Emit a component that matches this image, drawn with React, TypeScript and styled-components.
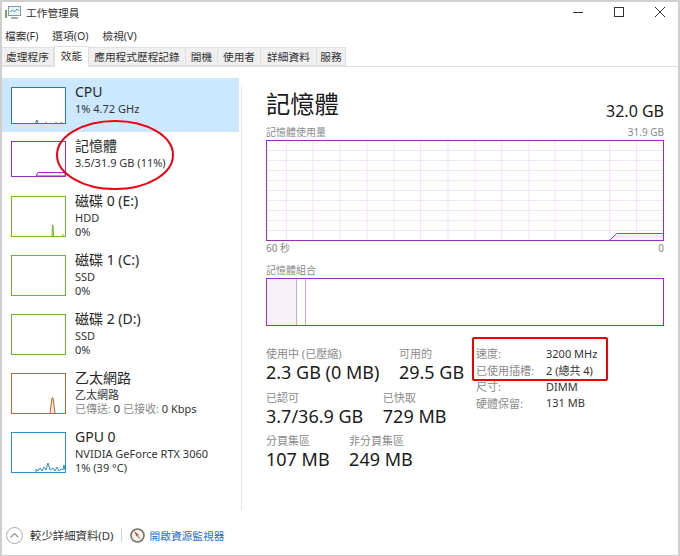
import React from 'react';
import styled, { createGlobalStyle } from 'styled-components';

const GlobalStyle = createGlobalStyle`
  html, body {
    margin: 0;
    padding: 0;
    background: #ffffff;
  }
  * {
    box-sizing: border-box;
  }
`

const Window = styled.div`
  position: relative;
  width: 680px;
  height: 556px;
  background: #ffffff;
  border: 1px solid #cfcfcf;
  border-width: 2px 2px 1px 2px;
  font-family: "Noto Sans", "Noto Sans CJK TC", sans-serif;
  color: #1a1a1a;
  display: flex;
  flex-direction: column;
  overflow: hidden;
`

const TitleBar = styled.div`
  height: 22px;
  display: flex;
  align-items: center;
  padding: 0 0 2px 3px;
  flex: none;
`

const TitleText = styled.span`
  font-size: 10.7px;
  margin-left: 5px;
  color: #333333;
`

const WindowButtons = styled.div`
  margin-left: auto;
  display: flex;
  align-items: center;
  gap: 31px;
  padding-right: 13px;
  color: #333333;
`

const MenuBar = styled.div`
  height: 22px;
  display: flex;
  align-items: center;
  gap: 14px;
  padding-left: 3px;
  font-size: 10.7px;
  color: #333333;
  flex: none;
`

const TabStrip = styled.div`
  height: 21px;
  display: flex;
  align-items: flex-end;
  border-bottom: 1px solid #e0e0e0;
  flex: none;
`

const Tab = styled.div<{ $active?: boolean; $width: number }>`
  width: ${props => props.$width}px;
  height: ${props => props.$active ? 21 : 19}px;
  margin-bottom: ${props => props.$active ? -1 : 0}px;
  background: ${props => props.$active ? '#ffffff' : '#f0f0f0'};
  border: 1px solid #e0e0e0;
  border-bottom: ${props => props.$active ? 'none' : '1px solid #e0e0e0'};
  border-left-width: ${props => props.$active ? 1 : 0}px;
  font-size: 10.7px;
  line-height: 18px;
  text-align: center;
  color: #333333;
  white-space: nowrap;
`

const Body = styled.div`
  flex: 1;
  display: flex;
  min-height: 0;
`

const Sidebar = styled.div`
  width: 237px;
  margin-top: 11px;
  flex: none;
`

const SidebarRule = styled.div`
  width: 1px;
  height: 423px;
  margin: 20px 0 0 2px;
  background: #e3e3e3;
  flex: none;
`

const SideItem = styled.div<{ $selected?: boolean; $height: number }>`
  height: ${props => props.$height}px;
  padding: 9px 0 0 9px;
  display: flex;
  gap: 9px;
  background: ${props => props.$selected ? '#cce8ff' : 'transparent'};
`

const Thumb = styled.svg`
  flex: none;
  display: block;
`

const SideText = styled.div`
  margin-top: -6px;
  min-width: 0;
  white-space: nowrap;
`

const SideName = styled.div`
  font-size: 14px;
  line-height: 21px;
  color: #262626;
`

const SideLine = styled.div`
  font-size: 11px;
  line-height: 13.5px;
  color: #333333;
`

const Muted = styled.span`
  color: #8a8a8a;
`

const Main = styled.div`
  flex: 1;
  padding: 15px 14px 0 24px;
  min-width: 0;
`

const Header = styled.div`
  display: flex;
  justify-content: space-between;
  align-items: flex-end;
  height: 40px;
  margin-bottom: 3px;
`

const HeaderTitle = styled.div`
  font-size: 24.3px;
  line-height: 36px;
  color: #1a1a1a;
`

const HeaderValue = styled.div`
  font-size: 16px;
  line-height: 22px;
  color: #1a1a1a;
`

const ChartLabels = styled.div`
  display: flex;
  justify-content: space-between;
  font-size: 10px;
  line-height: 14px;
  color: #8a8a8a;
`

const Chart = styled.svg`
  display: block;
  margin-top: 1px;
`

const SectionGap = styled.div`
  height: 8px;
`

const Lower = styled.div`
  display: flex;
  margin-top: 20px;
`

const StatColumn = styled.div`
  width: 210px;
  flex: none;
`

const StatRow = styled.div`
  display: flex;
  gap: 19.5px;
  height: 43.5px;
`

const StatLabel = styled.div`
  font-size: 11px;
  line-height: 16px;
  color: #8a8a8a;
  white-space: nowrap;
`

const StatValue = styled.div`
  font-size: 18px;
  line-height: 21px;
  color: #1a1a1a;
  white-space: nowrap;
`

const DetailTable = styled.div`
  display: grid;
  grid-template-columns: 70px auto;
  grid-auto-rows: 16.5px;
  align-items: center;
  font-size: 11px;
  margin-top: -1px;
`

const DetailKey = styled.div`
  color: #8a8a8a;
  white-space: nowrap;
`

const DetailValue = styled.div`
  color: #333333;
  white-space: nowrap;
`

const Footer = styled.div`
  height: 40px;
  margin-top: auto;
  display: flex;
  align-items: center;
  padding-left: 4px;
  flex: none;
`

const FooterIcon = styled.svg`
  flex: none;
  display: block;
`

const FooterText = styled.span`
  margin-left: 7px;
  font-size: 11.4px;
  color: #333333;
`

const FooterDivider = styled.div`
  width: 1px;
  height: 14px;
  background: #d5d5d5;
  margin: 0 8px 0 7px;
`

const FooterLink = styled.span`
  margin-left: 5px;
  font-size: 10.7px;
  color: #1f6fd0;
`

const RedOval = styled.svg`
  position: absolute;
  left: 52px;
  top: 116px;
  pointer-events: none;
`

const RedBox = styled.div`
  position: absolute;
  left: 470px;
  top: 335px;
  width: 136px;
  height: 44px;
  border: 2px solid #f00000;
  border-radius: 2px;
  pointer-events: none;
`

const tabs = [
  { label: '處理程序', width: 52 },
  { label: '效能', width: 35, active: true },
  { label: '應用程式歷程記錄', width: 97 },
  { label: '開機', width: 32 },
  { label: '使用者', width: 43 },
  { label: '詳細資料', width: 56 },
  { label: '服務', width: 29 },
]

interface ThumbProps {
  color: string,
  height: number,
  path?: string,
  fill?: string
}

const Sparkline = ({ color, height, path, fill }: ThumbProps) => (
  <Thumb width={55} height={height} viewBox={`0 0 55 ${height}`}>
    <rect x={0.5} y={0.5} width={54} height={height - 1} fill="#ffffff" stroke={color} />
    {path && <path d={path} fill={fill || 'none'} stroke={color} strokeWidth={1} />}
  </Thumb>
)

const verticals = [20.7, 47, 74, 101, 128, 154.7, 182, 209, 235.7, 263, 289, 316, 343.7, 370.7]
const horizontals = [10, 20, 30, 40, 50, 60, 70, 80, 90]

const App = () => {
  return (
    <Window>
      <GlobalStyle />
      <TitleBar>
        <svg width={16} height={15} viewBox="0 0 16 15">
          <rect x={0} y={5} width={2} height={8} fill="#6fae6a" />
          <rect x={3.5} y={1.5} width={12} height={9} fill="#eef3f6" stroke="#8b979e" />
          <path d="M5 7 L7.5 5 L9.5 7 L12 4 L14 6" fill="none" stroke="#2f9fd0" strokeWidth={1} />
          <rect x={6} y={12} width={7} height={2} fill="#a3adb3" />
        </svg>
        <TitleText>工作管理員</TitleText>
        <WindowButtons>
          <svg width={10} height={10} viewBox="0 0 10 10">
            <path d="M0 5.5 H10" stroke="#333333" strokeWidth={1} />
          </svg>
          <svg width={10} height={10} viewBox="0 0 10 10">
            <rect x={0.5} y={0.5} width={9} height={9} fill="none" stroke="#333333" />
          </svg>
          <svg width={10} height={10} viewBox="0 0 10 10">
            <path d="M0 0 L10 10 M10 0 L0 10" stroke="#333333" strokeWidth={1} />
          </svg>
        </WindowButtons>
      </TitleBar>
      <MenuBar>
        <span>檔案(F)</span>
        <span>選項(O)</span>
        <span>檢視(V)</span>
      </MenuBar>
      <TabStrip>
        {tabs.map(t => (
          <Tab key={t.label} $active={t.active} $width={t.width}>{t.label}</Tab>
        ))}
      </TabStrip>
      <Body>
        <Sidebar>
          <SideItem $selected $height={54}>
            <Sparkline color="#1a7fb8" height={37} path="M25 36 V34 L26 33 L27 36 M35 36 V35 M45 36 V35 M50 36 V35" />
            <SideText>
              <SideName>CPU</SideName>
              <SideLine>1% 4.72 GHz</SideLine>
            </SideText>
          </SideItem>
          <SideItem $height={55}>
            <Sparkline color="#9a2fbb" height={36} path="M25 35 L27 31.5 H54 V35 Z" fill="#f4eff6" />
            <SideText>
              <SideName>記憶體</SideName>
              <SideLine>3.5/31.9 GB (11%)</SideLine>
            </SideText>
          </SideItem>
          <SideItem $height={59}>
            <Sparkline color="#6cb52d" height={41} path="M41 40 L41.5 29 H42 L42.5 40 M52 40 V38" />
            <SideText>
              <SideName>磁碟 0 (E:)</SideName>
              <SideLine>HDD</SideLine>
              <SideLine>0%</SideLine>
            </SideText>
          </SideItem>
          <SideItem $height={59}>
            <Sparkline color="#6cb52d" height={41} />
            <SideText>
              <SideName>磁碟 1 (C:)</SideName>
              <SideLine>SSD</SideLine>
              <SideLine>0%</SideLine>
            </SideText>
          </SideItem>
          <SideItem $height={59}>
            <Sparkline color="#6cb52d" height={41} />
            <SideText>
              <SideName>磁碟 2 (D:)</SideName>
              <SideLine>SSD</SideLine>
              <SideLine>0%</SideLine>
            </SideText>
          </SideItem>
          <SideItem $height={59}>
            <Sparkline color="#b86b2a" height={41} path="M39 40 L41 25 H42 L44 40" fill="#f5e6d8" />
            <SideText>
              <SideName>乙太網路</SideName>
              <SideLine>乙太網路</SideLine>
              <SideLine><Muted>已傳送:</Muted> 0 <Muted>已接收:</Muted> 0 Kbps</SideLine>
            </SideText>
          </SideItem>
          <SideItem $height={59}>
            <Sparkline color="#2f8fcb" height={41} path="M25 40 V37 L27 39 L29 36 L31 39 L33 35 L35 38 L37 31 L39 38 L42 36 L44 39 L46 35 L48 39 L50 37 L52 38 L53 33 L54 38" />
            <SideText>
              <SideName>GPU 0</SideName>
              <SideLine>NVIDIA GeForce RTX 3060</SideLine>
              <SideLine>1% (39 °C)</SideLine>
            </SideText>
          </SideItem>
        </Sidebar>
        <SidebarRule />
        <Main>
          <Header>
            <HeaderTitle>記憶體</HeaderTitle>
            <HeaderValue>32.0 GB</HeaderValue>
          </Header>
          <ChartLabels>
            <span>記憶體使用量</span>
            <span>31.9 GB</span>
          </ChartLabels>
          <Chart width={398} height={101} viewBox="0 0 398 101">
            {verticals.map(x => (
              <path key={x} d={`M${x} 0 V101`} stroke="#efe3f5" strokeWidth={1} />
            ))}
            {horizontals.map(y => (
              <path key={y} d={`M0 ${y + 0.5} H398`} stroke="#efe3f5" strokeWidth={1} />
            ))}
            <path d="M344 100 L350.7 93.5 H398 V100 Z" fill="#f4f2f5" stroke="none" />
            <path d="M344 100 L350.7 93.5 H398" fill="none" stroke="#a63fd0" strokeWidth={1} />
            <rect x={0.5} y={0.5} width={397} height={100} fill="none" stroke="#9a2fbb" />
          </Chart>
          <ChartLabels>
            <span>60 秒</span>
            <span>0</span>
          </ChartLabels>
          <SectionGap />
          <ChartLabels>
            <span>記憶體組合</span>
          </ChartLabels>
          <Chart width={398} height={48} viewBox="0 0 398 48">
            <rect x={0.5} y={0.5} width={30} height={47} fill="#f4f2f5" />
            <path d="M30.5 0 V48 M39.5 0 V48" stroke="#cfa7dd" strokeWidth={1} />
            <rect x={0.5} y={0.5} width={397} height={47} fill="none" stroke="#9a2fbb" />
          </Chart>
          <Lower>
            <StatColumn>
              <StatRow>
                <div>
                  <StatLabel>使用中 (已壓縮)</StatLabel>
                  <StatValue>2.3 GB (0 MB)</StatValue>
                </div>
                <div>
                  <StatLabel>可用的</StatLabel>
                  <StatValue>29.5 GB</StatValue>
                </div>
              </StatRow>
              <StatRow>
                <div>
                  <StatLabel>已認可</StatLabel>
                  <StatValue>3.7/36.9 GB</StatValue>
                </div>
                <div>
                  <StatLabel>已快取</StatLabel>
                  <StatValue>729 MB</StatValue>
                </div>
              </StatRow>
              <StatRow>
                <div>
                  <StatLabel>分頁集區</StatLabel>
                  <StatValue>107 MB</StatValue>
                </div>
                <div>
                  <StatLabel>非分頁集區</StatLabel>
                  <StatValue>249 MB</StatValue>
                </div>
              </StatRow>
            </StatColumn>
            <DetailTable>
              <DetailKey>速度:</DetailKey>
              <DetailValue>3200 MHz</DetailValue>
              <DetailKey>已使用插槽:</DetailKey>
              <DetailValue>2 (總共 4)</DetailValue>
              <DetailKey>尺寸:</DetailKey>
              <DetailValue>DIMM</DetailValue>
              <DetailKey>硬體保留:</DetailKey>
              <DetailValue>131 MB</DetailValue>
            </DetailTable>
          </Lower>
        </Main>
      </Body>
      <Footer>
        <FooterIcon width={17} height={17} viewBox="0 0 17 17">
          <circle cx={8.5} cy={8.5} r={8} fill="#ffffff" stroke="#a8a8a8" />
          <path d="M4.5 10.5 L8.5 6.5 L12.5 10.5" fill="none" stroke="#909090" strokeWidth={1.1} />
        </FooterIcon>
        <FooterText>較少詳細資料(D)</FooterText>
        <FooterDivider />
        <FooterIcon width={15} height={15} viewBox="0 0 15 15">
          <circle cx={7.5} cy={7.5} r={6.5} fill="#f6f3ec" stroke="#77726a" strokeWidth={1.6} />
          <path d="M4 3 L8.6 6.6 L6.6 8.4 Z" fill="#d8402c" />
          <path d="M8.6 6.6 L11 12 L6.6 8.4 Z" fill="#b5b0a6" />
        </FooterIcon>
        <FooterLink>開啟資源監視器</FooterLink>
      </Footer>
      <RedOval width={122} height={74} viewBox="0 0 122 74">
        <ellipse cx={61} cy={37} rx={58} ry={34} fill="none" stroke="#ee0010" strokeWidth={2} />
      </RedOval>
      <RedBox />
    </Window>
  )
}

export default App
